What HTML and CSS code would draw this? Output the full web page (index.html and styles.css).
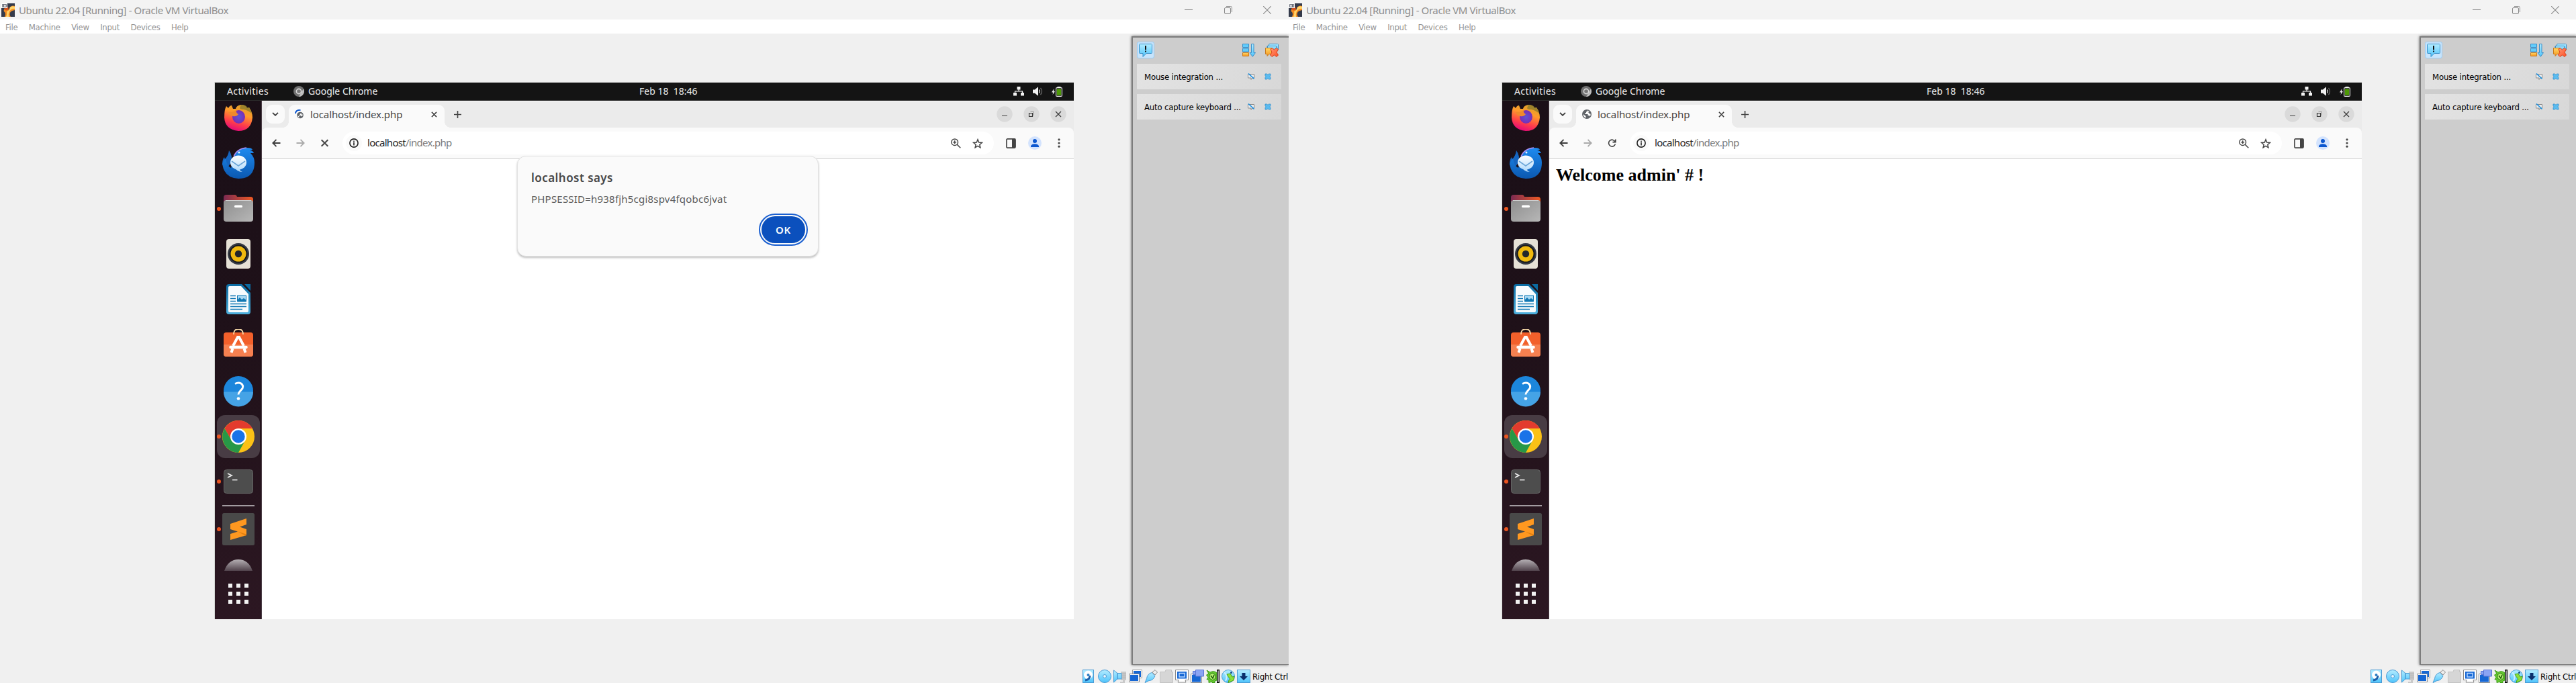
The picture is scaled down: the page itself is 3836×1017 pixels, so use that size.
FILE: index.html
```html
<!DOCTYPE html>
<html lang="en">
<head>
<meta charset="utf-8">
<title>Ubuntu 22.04 [Running] - Oracle VM VirtualBox</title>
<link rel="stylesheet" href="styles.css">
</head>
<body>
<svg class="defs" aria-hidden="true">
  <defs>
    <linearGradient id="gFox" x1="0.7" y1="0" x2="0.35" y2="1"><stop offset="0" stop-color="#d8a128"/><stop offset=".35" stop-color="#ff9a2c"/><stop offset=".7" stop-color="#ff3e4a"/><stop offset="1" stop-color="#e3067c"/></linearGradient>
    <radialGradient id="gFoxIn"><stop offset="0" stop-color="#5a55d8"/><stop offset="1" stop-color="#7a2db4"/></radialGradient>
    <linearGradient id="gBird" x1="0" y1="0" x2="0" y2="1"><stop offset="0" stop-color="#1e8bf0"/><stop offset="1" stop-color="#0b58b0"/></linearGradient>
    <linearGradient id="gEnv" x1="0" y1="0" x2="0" y2="1"><stop offset="0" stop-color="#fff"/><stop offset="1" stop-color="#b9defc"/></linearGradient>
    <linearGradient id="gTab"><stop offset="0" stop-color="#7c2a52"/><stop offset="1" stop-color="#ee5a24"/></linearGradient>
    <linearGradient id="gFold" x1="0" y1="0" x2="1" y2="1"><stop offset="0" stop-color="#8e8e8e"/><stop offset="1" stop-color="#b7b7b7"/></linearGradient>
    <linearGradient id="gDoc" x1="0" y1="0" x2="0" y2="1"><stop offset="0" stop-color="#0b6ba2"/><stop offset="1" stop-color="#4cb0dd"/></linearGradient>
    <linearGradient id="gDisc" x1="0" y1="0" x2="0" y2="1"><stop offset="0" stop-color="#b5b0b4"/><stop offset="1" stop-color="#51434c"/></linearGradient>
    <linearGradient id="gCyan" x1="0" y1="0" x2="0" y2="1"><stop offset="0" stop-color="#b4ecff"/><stop offset="1" stop-color="#4fc4fb"/></linearGradient>
    <linearGradient id="gOrange" x1="0" y1="0" x2="0" y2="1"><stop offset="0" stop-color="#ffd866"/><stop offset="1" stop-color="#f5941e"/></linearGradient>
    <linearGradient id="gRed" x1="0" y1="0" x2="1" y2="1"><stop offset="0" stop-color="#ff9a76"/><stop offset="1" stop-color="#ff5026"/></linearGradient>
    <linearGradient id="gMeter" x1="0" y1="0" x2="0" y2="1"><stop offset="0" stop-color="#f01000"/><stop offset=".5" stop-color="#ffd000"/><stop offset="1" stop-color="#20c000"/></linearGradient>
  </defs>

  <symbol id="vbox" viewBox="0 0 20 20"><path fill="#343a4a" d="M0 0h20v20H0z"/><path fill="#f28c22" d="M4 9q3-3 6 0q3 1 2-2q3-5 8-3v6q-6 1-7 4q-1 4 1 6H5q2-4 0-7q-2-1-1-4z"/><path fill="#ffd56b" d="M13 6q3-3 7-1v3q-6 0-8 4q-2 4-1 8H7q2-5 1-8q4-1 5-6z"/><circle cx="7.5" cy="7.5" r="3" fill="#d9531c"/><path fill="#fff" d="M0 0h9v7H0z"/><path fill="#4a4f5c" d="M1.2 1.2h6.6v4.6H1.2z"/><path fill="none" stroke="#fff" d="M2.5 2v3M4.5 2v3M6.5 2v3"/></symbol>
  <symbol id="min" viewBox="0 0 12 12"><path stroke="#8b8b8b" d="M0 5.5h12"/></symbol>
  <symbol id="max" viewBox="0 0 12 12"><rect x=".5" y="2.5" width="9" height="9" rx="1.5" fill="none" stroke="#8b8b8b"/><path fill="none" stroke="#8b8b8b" d="M3 .5h6.5a2 2 0 0 1 2 2V9"/></symbol>
  <symbol id="cls" viewBox="0 0 12 12"><path stroke="#8b8b8b" stroke-width="1.1" d="M0 0l12 12M12 0L0 12"/></symbol>

  <symbol id="chromeGrey" viewBox="0 0 16 16"><circle cx="8" cy="8" r="8" fill="#707070"/><path fill="#bdbdbd" d="M15 4.2A8 8 0 0 1 8 16l4-7z"/><circle cx="8" cy="8" r="4.4" fill="#d8d8d8"/><circle cx="8" cy="8" r="2.8" fill="#777"/></symbol>
  <symbol id="net" viewBox="0 0 16 14"><path fill="#f2f2f2" d="M5.5 0h5v4.5h-5zM0 9h5v4.5H0zM11 9h5v4.5h-5z"/><path fill="none" stroke="#f2f2f2" stroke-width="1.2" d="M8 4v3M2.5 10V6.8h11V10"/></symbol>
  <symbol id="vol" viewBox="0 0 15 14"><path fill="#f2f2f2" d="M0 4.5h3L8 .3v13.4l-5-4H0z"/><path fill="none" stroke="#ccc" stroke-width="1.3" d="M9.5 4.5q1.8 2.5 0 5"/><path fill="none" stroke="#666" stroke-width="1.3" d="M11.5 2q4 5 0 10"/></symbol>
  <symbol id="bat" viewBox="0 0 16 15"><path fill="#f2f2f2" d="M3.6 3L0 8.6h2.2L1.6 12L5 7H2.9z"/><rect x="6.6" y="1.6" width="8.8" height="12.8" rx="1.5" fill="#141414" stroke="#f2f2f2" stroke-width="1.1"/><path fill="#f2f2f2" d="M8.5 0h5v1.5h-5z"/><path fill="#4e9a06" d="M7.8 3.4h6.4v9.4H7.8z"/></symbol>

  <symbol id="firefox" viewBox="0 0 48 48"><path fill="url(#gFox)" d="M6 7l3 3q2-4 5-4l2 5h4q1-5 8-6q6 0 9 5l3-1q5 7 5 15q-2 20-21 20Q4 42 3 24Q3 12 6 7z"/><path fill="#8f7c2c" opacity=".8" d="M28 5q8 0 9 4l3 0q3 4 4 9q-6-5-12-6q-5 0-6-2z"/><ellipse cx="24.5" cy="23" rx="9.5" ry="10" fill="url(#gFoxIn)"/><path fill="#f08a2c" d="M9 16q8 0 12-3q-1 4 3 6q-3 4-8 3q-5-1-7-6z"/></symbol>
  <symbol id="bird" viewBox="0 0 48 48"><path fill="#1565c0" d="M10 5q6 8 3 18l-6 9l-7-6q0-8 3-11l1 3q5-5 6-13z"/><path fill="url(#gBird)" d="M17 16Q22 1 37 1q7 0 8 3l-4 0q5 2 6 5h-5q6 6 6 14q0 24-24 24Q3 46 0 25q2-5 5-8q2 12 8 14z"/><path fill="none" stroke="#a98cf2" stroke-width="1.6" d="M17 14Q22 2 36 1"/><ellipse cx="24" cy="23" rx="12" ry="10.5" fill="url(#gEnv)"/><path fill="#b9defc" d="M18 30q4 7 12 7q-5-2-4-5z"/><path fill="none" stroke="#6ba6d8" stroke-width="1.6" d="M14 21l10 7l10-7"/><circle cx="25" cy="8" r="1.5" fill="#e8f4ff"/></symbol>
  <symbol id="files" viewBox="0 0 48 48"><path fill="url(#gTab)" d="M2 7q0-4 4-4h13q2 0 3 3h20q4 0 4 4v10H2z"/><rect x="2" y="11" width="44" height="32" rx="4" fill="url(#gFold)"/><path stroke="#cfcfcf" d="M5 11.500h38"/><rect x="18" y="18.500" width="12" height="3.500" rx="1.500" fill="#fff"/></symbol>
  <symbol id="speaker" viewBox="0 0 48 48"><rect x="6" y="2" width="36" height="44" rx="4" fill="#e6e1d6"/><circle cx="24" cy="24" r="16" fill="#353a44"/><circle cx="24" cy="24" r="13.5" fill="#16181d"/><circle cx="24" cy="24" r="11.5" fill="#f0b90e"/><circle cx="24" cy="24" r="5.2" fill="#23262c"/></symbol>
  <symbol id="writer" viewBox="0 0 48 48"><path fill="url(#gDoc)" d="M10 1h19l13 13v28q0 4-4 4H10q-4 0-4-4V5q0-4 4-4z"/><path fill="#f7fbfd" d="M11 4h17l11 12v25q0 2-2 2H11q-2 0-2-2V6q0-2 2-2z"/><path fill="#0b6ba2" d="M33 1h9v10z"/><path stroke="#1178b4" stroke-width="1.5" d="M12 18.500h8M12 22.500h8M12 26.500h8M12 30.500h24M12 34.500h24M12 38.500h18"/><path fill="#a9d8f2" stroke="#1178b4" d="M22.500 18h13v9h-13z"/><path fill="#1178b4" d="M23 27v-3l3-3l3 3l3-2l4 3v2z"/></symbol>
  <symbol id="store" viewBox="0 0 48 48"><rect x="2" y="5" width="44" height="36" rx="4" fill="#f2602b"/><path fill="#f58050" d="M2 23h44v14q0 4-4 4H6q-4 0-4-4z"/><path fill="none" stroke="#f7d9a8" stroke-width="1.8" d="M17 8Q17 0 24 0t7 8"/><path fill="none" stroke="#fff" stroke-width="4" d="M16 25l7-13h2l7 13"/><path stroke="#fff" stroke-width="4.5" stroke-linecap="round" d="M12.500 27h23"/><path stroke="#fff" stroke-width="4" d="M15.500 29l-2 6M32.500 29l2 6"/></symbol>
  <symbol id="help" viewBox="0 0 48 48"><circle cx="24" cy="24" r="22" fill="#1c86dc"/><path fill="#45a3e6" d="M2 25.500h44A22 22 0 0 1 2 25.500z"/><path fill="none" stroke="#fff" stroke-width="3" d="M19 13.500q5-2.500 9-.5q4 3 2 7.500l-3.500 4q-2.500 2.500-2.500 5"/><circle cx="24" cy="35.5" r="2.3" fill="#fff"/></symbol>
  <symbol id="chrome" viewBox="0 0 48 48"><circle cx="24" cy="24" r="24" fill="#fbc116"/><path fill="#e33b2e" d="M3.500 12A24 24 0 0 1 45 12H24L14 30z"/><path fill="#279847" d="M3.500 12A24 24 0 0 0 24 48l10-18H14z"/><circle cx="24" cy="24" r="12" fill="#fff"/><circle cx="24" cy="24" r="9.7" fill="#1a73e8"/></symbol>
  <symbol id="term" viewBox="0 0 48 48"><rect x="2.5" y="6.5" width="43" height="35" rx="4" fill="#4d4d4d" stroke="#646464"/><path fill="none" stroke="#e8e8e8" stroke-width="1.8" d="M8 12l6 3l-6 3"/><path stroke="#ccc" stroke-width="2" d="M15 21.500h7.500"/></symbol>
  <symbol id="subl" viewBox="0 0 48 48"><rect width="48" height="48" rx="2.5" fill="#494949"/><path fill="#ff9820" d="M12 16l24-8v9l-10 3.500L36 24v9L12 40v-9l11-3.500L12 24z"/><path fill="#e37f0e" d="M23 27.500l13 4v1.500l-2 .5z"/></symbol>
  <symbol id="disc" viewBox="0 0 48 17"><path fill="url(#gDisc)" d="M3 17Q9 0 24 0t21 17z"/></symbol>
  <symbol id="grid" viewBox="0 0 30 30"><path fill="none" stroke="#f2f2f2" stroke-width="6" stroke-dasharray="6" d="M0 3h30M0 15h30M0 27h30"/></symbol>

  <symbol id="chev" viewBox="0 0 10 6"><path fill="none" stroke="#3c3c3c" stroke-width="1.8" d="M1 .8l4 4l4-4"/></symbol>
  <symbol id="x" viewBox="0 0 10 10"><path stroke="#444" stroke-width="1.7" d="M1 1l8 8M9 1L1 9"/></symbol>
  <symbol id="plus" viewBox="0 0 10 10"><path stroke="#444" stroke-width="1.5" d="M5 0v10M0 5h10"/></symbol>
  <symbol id="globe" viewBox="0 0 14 14"><circle cx="7" cy="7" r="7" fill="#5f6368"/><path fill="#fafafa" d="M8 1.500q0 2-2 2v1.500H4.500v2h4v2H10q1.500 0 1.500 1.500Q13 9 12.500 6.500h-2V5H9.500V3H11Q10 1.800 8 1.500zM1.500 7l4 3v2.500Q1.800 11.200 1.500 7z"/></symbol>
  <symbol id="loading" viewBox="0 0 14 14"><circle cx="8" cy="8.5" r="4.8" fill="#5f6368"/><path fill="#fafafa" d="M9 5q0 1.500-1.500 1.500v1.500H6v1h3l1 1.500q2-1 1.800-3h-1.500zM4.300 9l2.200 1.500v1.800Q4.500 11.500 4.300 9z"/><path fill="none" stroke="#0b57d0" stroke-width="2" d="M.8 6Q1.800.5 8.500.9"/></symbol>
  <symbol id="back" viewBox="0 0 13 12"><path fill="none" stroke="#3c3c3c" stroke-width="1.8" d="M12.500 6H1.500M6.500 .8L1.300 6l5.200 5.200"/></symbol>
  <symbol id="fwd" viewBox="0 0 13 12"><path fill="none" stroke="#ababab" stroke-width="1.8" d="M.5 6h11M6.500 .8L11.700 6l-5.200 5.200"/></symbol>
  <symbol id="reload" viewBox="0 0 13 13"><path fill="none" stroke="#3c3c3c" stroke-width="1.7" d="M11.300 4A5.400 5.400 0 1 0 11.800 8M12.200 .5v4.500H7.500"/></symbol>
  <symbol id="info" viewBox="0 0 14 14"><circle cx="7" cy="7" r="6.1" fill="none" stroke="#1f1f1f" stroke-width="1.6"/><path stroke="#1f1f1f" stroke-width="1.6" d="M7 6v4.500M7 3.600v1.600"/></symbol>
  <symbol id="zoomIn" viewBox="0 0 15 15"><circle cx="5.7" cy="5.7" r="4.8" fill="none" stroke="#444" stroke-width="1.5"/><path fill="none" stroke="#444" stroke-width="1.5" d="M9 9l5.300 5.300M5.700 3.300v4.800M3.300 5.700h4.800"/></symbol>
  <symbol id="star" viewBox="0 0 16 15"><path fill="none" stroke="#444" stroke-width="1.5" d="M8 1.800l1.700 4.200l4.600.4l-3.500 3l1.100 4.400L8 11.400l-3.900 2.400l1.100-4.400l-3.500-3l4.600-.4z"/></symbol>
  <symbol id="side" viewBox="0 0 15 15"><rect x=".9" y=".9" width="13.2" height="13.2" rx="1.3" fill="none" stroke="#444" stroke-width="1.6"/><path fill="#444" d="M9 1h5v13H9z"/></symbol>
  <symbol id="user" viewBox="0 0 20 20"><circle cx="10" cy="10" r="10" fill="#d3e3fd"/><circle cx="10" cy="7" r="3" fill="#0b57d0"/><path fill="#0b57d0" d="M4 16v-1.800q1.500-3 6-3t6 3V16z"/></symbol>
  <symbol id="dots" viewBox="0 0 4 14"><circle cx="2" cy="1.8" r="1.6" fill="#444"/><circle cx="2" cy="7" r="1.6" fill="#444"/><circle cx="2" cy="12.2" r="1.6" fill="#444"/></symbol>
  <symbol id="wmin" viewBox="0 0 24 24"><circle cx="12" cy="12" r="11.7" fill="#dadada"/><path stroke="#3c3c3c" d="M8 14.500h8"/></symbol>
  <symbol id="wmax" viewBox="0 0 24 24"><circle cx="12" cy="12" r="11.7" fill="#dadada"/><path fill="none" stroke="#3c3c3c" stroke-width="1.2" d="M8.500 10.500h5v5h-5z"/><path fill="none" stroke="#999" d="M10.500 8.500h5v5.500"/></symbol>
  <symbol id="wcls" viewBox="0 0 24 24"><circle cx="12" cy="12" r="11.7" fill="#dadada"/><path stroke="#3c3c3c" stroke-width="1.3" d="M8 8l8 8M16 8l-8 8"/></symbol>

  <symbol id="note" viewBox="0 0 20 20"><path fill="url(#gCyan)" stroke="#3a8fc8" d="M1.500.5h17q1 0 1 1v12q0 1-1 1H11l-5 5v-5H1.500q-1 0-1-1v-12q0-1 1-1z"/><path stroke="#111" stroke-width="2" d="M10 3v6M10 10.500v2"/></symbol>
  <symbol id="sort" viewBox="0 0 20 20"><g stroke="#3a8fc8"><path fill="#62ccfb" d="M.5.5h9v5h-9zM.5 7h9v5h-9z"/><path fill="url(#gOrange)" stroke="#c87a1e" d="M.5 13.500h9v5h-9z"/><path fill="url(#gCyan)" d="M13.500.5H17v13h2.500l-4.200 5.800l-4.200-5.800h2.400z"/></g></symbol>
  <symbol id="clear" viewBox="0 0 20 20"><path fill="url(#gCyan)" stroke="#3a8fc8" d="M6 .5h12.500q1 0 1 1v8H3v-6h2z"/><path fill="url(#gCyan)" stroke="#3a8fc8" d="M3.500 3.500h13v6h-13z"/><path fill="url(#gOrange)" stroke="#c87a1e" d="M.5 6.500h10v9H6l-3 3v-3H.5z"/><path fill="url(#gRed)" stroke="#d8421a" d="M8 8l2.500-1.500L13.500 9l3-2.500L19.500 8.500L17 13l2.500 4l-2.500 2.500l-3.500-2.500l-3.500 2.500L7.500 17L10 13z"/></symbol>
  <symbol id="mute" viewBox="0 0 10 10"><path fill="#eee" stroke="#888" d="M.5 1.500h9v5.500H7l-2 2.500V7H.5z"/><path stroke="#1e90e0" stroke-width="1.6" d="M1 .5l8.500 8"/></symbol>
  <symbol id="xblue" viewBox="0 0 10 10"><path fill="#5bbcf0" stroke="#3590cc" stroke-width=".8" d="M1 1h2.500L5 2.300L6.500 1H9v2.500L7.800 5L9 6.500V9H6.500L5 7.800L3.500 9H1V6.500L2.200 5L1 3.500z"/></symbol>

  <symbol id="s1" viewBox="0 0 20 20"><rect x=".5" y=".5" width="16" height="19" fill="url(#gCyan)" stroke="#4a9ad4"/><circle cx="8.5" cy="8" r="6.5" fill="#fff"/><circle cx="8.5" cy="8" r="2" fill="#2b7fc4"/><path fill="none" stroke="#1d5fa8" stroke-width="3" d="M11 9q0 6-7 7"/></symbol>
  <symbol id="s2" viewBox="0 0 20 20"><circle cx="10" cy="10" r="9.5" fill="url(#gCyan)" stroke="#4a9ad4"/><circle cx="10" cy="10" r="2.5" fill="#e6f6ff" stroke="#4a9ad4"/></symbol>
  <symbol id="s3" viewBox="0 0 20 20"><path fill="#c9c9c9" d="M11 3h8v13h-2v4h-7v-2h4v-2h-3z"/><path stroke="#aaa" d="M13 6.500h6M13 9.500h6M13 12.500h6"/><path fill="url(#gCyan)" stroke="#4a9ad4" d="M.5 1L6 5.500V14L.5 19zM6 5.500h6V14H6z"/></symbol>
  <symbol id="s4" viewBox="0 0 20 20"><path fill="#fff" stroke="#9a9a9a" d="M5.500.5h14v12h-14z"/><path fill="#1667d4" d="M7 2h11v9H7z"/><path fill="#fff" stroke="#8a8a8a" d="M.5 6.500h15v12H.5z"/><path fill="#1667d4" d="M2 8h12v9H2z"/></symbol>
  <symbol id="s5" viewBox="0 0 20 20"><path fill="#eee" stroke="#888" d="M12 4l4-3.500L19.500 4L16 8z"/><path fill="url(#gCyan)" stroke="#4a9ad4" d="M11 4.500l5 5q-3 7-9 7l-6 3l2.500-6q1-7 7.500-9z"/></symbol>
  <symbol id="s6" viewBox="0 0 20 20"><path fill="#d6d6d6" stroke="#c2c2c2" d="M.5 3.500H8l1-3h8.500v3h2v16H.5z"/></symbol>
  <symbol id="s7" viewBox="0 0 20 20"><path fill="#fff" stroke="#8a8a8a" d="M.5.5h19v15H15l1 3.500H4l1-3.500H.5z"/><path fill="#1667d4" d="M3 3h14v10.500H3z"/><path fill="none" stroke="#b8d8ff" stroke-width="1.4" d="M6 5.500h8v5.500H6z"/></symbol>
  <symbol id="s8" viewBox="0 0 20 20"><path fill="#fff" stroke="#8a8a8a" d="M.5 6.500h16v13H.5z"/><path fill="#1667d4" d="M2 8h13v10.500H2z"/><path fill="#8aa4f4" stroke="#5a74d4" d="M7.500.5h12V10h-12zM3.500 2.500h4v5h-4z"/></symbol>
  <symbol id="s9" viewBox="0 0 20 20"><path fill="#66c832" stroke="#3a9a14" d="M1 1l5 3q6-3 10 1v11l-3 1v2.500H9V18l-5 1.500v-4l-3-1l2-3L.5 8L4 6z"/><path fill="#b4f070" stroke="#2a7a10" d="M5 8l4-3l5 3v5l-4 3l-5-3z"/><path fill="none" stroke="#1c5a0a" stroke-width="1.6" d="M7 9l3 4l2-5"/><rect x="16.7" y=".7" width="2.6" height="18.6" class="meter" stroke="#000" stroke-width="1.4"/></symbol>
  <symbol id="s10" viewBox="0 0 20 20"><circle cx="10" cy="10" r="9.5" fill="url(#gCyan)" stroke="#4a9ad4"/><path fill="none" stroke="#cdefff" stroke-width="2" d="M4 4q6 6 2 13"/><path fill="#8be03a" stroke="#4aa016" d="M8 7l5-1l3 5l3-1l-1 6l-8 3.500l1-4l2-1l-3-4z"/><circle cx="14.5" cy="4.5" r="1.5" fill="#134a80"/></symbol>
  <symbol id="s11" viewBox="0 0 20 20"><rect x=".5" y=".5" width="19" height="19" fill="url(#gCyan)" stroke="#4a9ad4"/><path fill="#0a2f6c" d="M7.500 5h5v5H16l-6 6l-6-6h3.500z"/></symbol>
</svg>

<main class="screens">
  <section class="screen">
    <div class="vm">
      <header class="titlebar">
        <svg class="i20"><use href="#vbox"/></svg><span class="title">Ubuntu 22.04 [Running] - Oracle VM VirtualBox</span>
        <div class="winbtns"><svg><use href="#min"/></svg><svg><use href="#max"/></svg><svg><use href="#cls"/></svg></div>
      </header>
      <nav class="menubar"><span>File</span><span>Machine</span><span>View</span><span>Input</span><span>Devices</span><span>Help</span></nav>
      <div class="workspace">
        <div class="guest">
          <div class="topbar">
            <span class="activities">Activities</span><svg class="i16"><use href="#chromeGrey"/></svg><span class="app">Google Chrome</span>
            <span class="clock">Feb 18&nbsp; 18:46</span>
            <div class="tray"><svg class="net"><use href="#net"/></svg><svg class="vol"><use href="#vol"/></svg><svg class="bat"><use href="#bat"/></svg></div>
          </div>
          <div class="desktop">
            <aside class="dock">
              <div class="app-ico"><svg><use href="#firefox"/></svg></div>
              <div class="app-ico"><svg><use href="#bird"/></svg></div>
              <div class="app-ico on"><svg><use href="#files"/></svg></div>
              <div class="app-ico"><svg><use href="#speaker"/></svg></div>
              <div class="app-ico"><svg><use href="#writer"/></svg></div>
              <div class="app-ico"><svg><use href="#store"/></svg></div>
              <div class="app-ico"><svg><use href="#help"/></svg></div>
              <div class="app-ico on active"><svg><use href="#chrome"/></svg></div>
              <div class="app-ico on"><svg><use href="#term"/></svg></div>
              <hr>
              <div class="app-ico on subl"><svg><use href="#subl"/></svg></div>
              <svg class="disc"><use href="#disc"/></svg>
              <svg class="grid"><use href="#grid"/></svg>
            </aside>
            <div class="browser">
              <div class="tabs">
                <div class="tabsearch"><svg><use href="#chev"/></svg></div>
                <div class="tab"><svg class="fav"><use href="#loading"/></svg><span>localhost/index.php</span><svg class="x"><use href="#x"/></svg></div>
                <svg class="plus"><use href="#plus"/></svg>
                <div class="wmbtns"><svg><use href="#wmin"/></svg><svg><use href="#wmax"/></svg><svg><use href="#wcls"/></svg></div>
              </div>
              <div class="toolbar">
                <svg class="nav"><use href="#back"/></svg><svg class="nav"><use href="#fwd"/></svg><svg class="nav"><use href="#x"/></svg>
                <div class="omnibox"><span class="chip"><svg><use href="#info"/></svg></span><span class="url">localhost<span>/index.php</span></span><svg class="zoom"><use href="#zoomIn"/></svg><svg class="star"><use href="#star"/></svg></div>
                <svg class="side"><use href="#side"/></svg><svg class="user"><use href="#user"/></svg><svg class="dots"><use href="#dots"/></svg>
              </div>
              <div class="page">
                <div class="alert"><strong>localhost says</strong><p>PHPSESSID=h938fjh5cgi8spv4fqobc6jvat</p><button>OK</button></div>
              </div>
            </div>
          </div>
        </div>
        <aside class="notices">
          <div class="notice-tools"><span class="toggle"><svg class="i20"><use href="#note"/></svg></span><svg class="i20"><use href="#sort"/></svg><svg class="i20"><use href="#clear"/></svg></div>
          <div class="notice"><span>Mouse integration ...</span><svg><use href="#mute"/></svg><svg><use href="#xblue"/></svg></div>
          <div class="notice"><span>Auto capture keyboard ...</span><svg><use href="#mute"/></svg><svg><use href="#xblue"/></svg></div>
        </aside>
      </div>
      <footer class="statusbar busy"><svg><use href="#s1"/></svg><svg><use href="#s2"/></svg><svg><use href="#s3"/></svg><svg><use href="#s4"/></svg><svg><use href="#s5"/></svg><svg><use href="#s6"/></svg><svg><use href="#s7"/></svg><svg><use href="#s8"/></svg><svg><use href="#s9"/></svg><svg><use href="#s10"/></svg><svg><use href="#s11"/></svg><span>Right Ctrl</span></footer>
    </div>
  </section>

  <section class="screen second">
    <div class="vm">
      <header class="titlebar">
        <svg class="i20"><use href="#vbox"/></svg><span class="title">Ubuntu 22.04 [Running] - Oracle VM VirtualBox</span>
        <div class="winbtns"><svg><use href="#min"/></svg><svg><use href="#max"/></svg><svg><use href="#cls"/></svg></div>
      </header>
      <nav class="menubar"><span>File</span><span>Machine</span><span>View</span><span>Input</span><span>Devices</span><span>Help</span></nav>
      <div class="workspace">
        <div class="guest">
          <div class="topbar">
            <span class="activities">Activities</span><svg class="i16"><use href="#chromeGrey"/></svg><span class="app">Google Chrome</span>
            <span class="clock">Feb 18&nbsp; 18:46</span>
            <div class="tray"><svg class="net"><use href="#net"/></svg><svg class="vol"><use href="#vol"/></svg><svg class="bat"><use href="#bat"/></svg></div>
          </div>
          <div class="desktop">
            <aside class="dock">
              <div class="app-ico"><svg><use href="#firefox"/></svg></div>
              <div class="app-ico"><svg><use href="#bird"/></svg></div>
              <div class="app-ico on"><svg><use href="#files"/></svg></div>
              <div class="app-ico"><svg><use href="#speaker"/></svg></div>
              <div class="app-ico"><svg><use href="#writer"/></svg></div>
              <div class="app-ico"><svg><use href="#store"/></svg></div>
              <div class="app-ico"><svg><use href="#help"/></svg></div>
              <div class="app-ico on active"><svg><use href="#chrome"/></svg></div>
              <div class="app-ico on"><svg><use href="#term"/></svg></div>
              <hr>
              <div class="app-ico on subl"><svg><use href="#subl"/></svg></div>
              <svg class="disc"><use href="#disc"/></svg>
              <svg class="grid"><use href="#grid"/></svg>
            </aside>
            <div class="browser">
              <div class="tabs">
                <div class="tabsearch"><svg><use href="#chev"/></svg></div>
                <div class="tab"><svg class="fav"><use href="#globe"/></svg><span>localhost/index.php</span><svg class="x"><use href="#x"/></svg></div>
                <svg class="plus"><use href="#plus"/></svg>
                <div class="wmbtns"><svg><use href="#wmin"/></svg><svg><use href="#wmax"/></svg><svg><use href="#wcls"/></svg></div>
              </div>
              <div class="toolbar">
                <svg class="nav"><use href="#back"/></svg><svg class="nav"><use href="#fwd"/></svg><svg class="nav"><use href="#reload"/></svg>
                <div class="omnibox"><span class="chip"><svg><use href="#info"/></svg></span><span class="url">localhost<span>/index.php</span></span><svg class="zoom"><use href="#zoomIn"/></svg><svg class="star"><use href="#star"/></svg></div>
                <svg class="side"><use href="#side"/></svg><svg class="user"><use href="#user"/></svg><svg class="dots"><use href="#dots"/></svg>
              </div>
              <div class="page"><h1>Welcome admin' # !</h1></div>
            </div>
          </div>
        </div>
        <aside class="notices">
          <div class="notice-tools"><span class="toggle"><svg class="i20"><use href="#note"/></svg></span><svg class="i20"><use href="#sort"/></svg><svg class="i20"><use href="#clear"/></svg></div>
          <div class="notice"><span>Mouse integration ...</span><svg><use href="#mute"/></svg><svg><use href="#xblue"/></svg></div>
          <div class="notice"><span>Auto capture keyboard ...</span><svg><use href="#mute"/></svg><svg><use href="#xblue"/></svg></div>
        </aside>
      </div>
      <footer class="statusbar"><svg><use href="#s1"/></svg><svg><use href="#s2"/></svg><svg><use href="#s3"/></svg><svg><use href="#s4"/></svg><svg><use href="#s5"/></svg><svg><use href="#s6"/></svg><svg><use href="#s7"/></svg><svg><use href="#s8"/></svg><svg><use href="#s9"/></svg><svg><use href="#s10"/></svg><svg><use href="#s11"/></svg><span>Right Ctrl</span></footer>
    </div>
  </section>
</main>
</body>
</html>
```
FILE: styles.css
```css
* { box-sizing: border-box; }
body { margin: 0; background: #f0f0f0; font-family: "Noto Sans", sans-serif; }
svg { display: block; flex: none; overflow: visible; }
span, p, strong, h1 { white-space: nowrap; }
.defs { position: absolute; width: 0; height: 0; }

.screens { display: flex; height: 1017px; }
.screen { width: 1919px; height: 1017px; overflow: hidden; flex: none; }
.screen.second { width: 1917px; }
.vm { width: 1919px; height: 1017px; display: flex; flex-direction: column; background: #f0f0f0; }
.second .vm { width: 1920px; margin-left: -2px; }

.i20 { width: 20px; height: 20px; }
.i16 { width: 16px; height: 16px; }

/* host window chrome */
.titlebar { height: 29px; background: #f3f3f3; display: flex; align-items: center; padding: 0 26px 0 2px; }
.title { margin-left: 6px; font-size: 15px; letter-spacing: -0.4px; color: #8e8e8e; }
.winbtns { margin-left: auto; display: flex; gap: 46.5px; }
.winbtns svg { width: 12px; height: 12px; }
.menubar { height: 21px; background: #fff; display: flex; align-items: center; gap: 16.5px; padding: 2px 0 0 8px; font: 13px "DejaVu Sans Condensed", "DejaVu Sans", sans-serif; letter-spacing: -0.3px; color: #949494; }

.workspace { height: 944px; display: flex; align-items: flex-start; justify-content: space-between; padding-left: 320px; }

/* guest display */
.guest { width: 1279px; height: 800px; margin-top: 72px; border-top: 1px solid #dcdcdc; display: flex; flex-direction: column; box-shadow: -1px 0 #d6d9d6; }
.second .guest { width: 1280px; }
.topbar { height: 27px; background: #141414; color: #ededed; display: grid; grid-template-columns: 99px 22px 493px 1fr auto; align-items: center; padding: 0 17px 0 18px; font-size: 14px; line-height: 26px; border-bottom: 1px solid #2b2b2b; }
.activities { letter-spacing: 0.37px; }
.tray { display: flex; gap: 13px; align-items: center; }
.net { width: 16px; height: 14px; }
.vol { width: 15px; height: 14px; }
.bat { width: 16px; height: 15px; }

.desktop { flex: 1; display: flex; min-height: 0; }
.dock { width: 70px; padding: 1px 2px 0 3px; background: linear-gradient(155deg, #1a0f17, #1f1119 45%, #2c1722); border-right: 1px solid #4a3d45; display: flex; flex-direction: column; align-items: center; }
.app-ico { width: 64px; height: 48px; margin-bottom: 19.8px; display: grid; place-items: center; position: relative; flex: none; }
.app-ico svg { width: 48px; height: 48px; }
.app-ico.on::before { content: ""; position: absolute; left: 0; top: 21px; width: 6px; height: 6px; border-radius: 50%; background: #e95420; z-index: 1; }
.app-ico.active { height: 64px; margin: -8px 0 11.8px; border-radius: 12px; background: #483c44; }
.app-ico.active::before { top: 29px; }
.dock hr { width: 48px; height: 2px; margin: -9.5px 0 10.5px; border: 0; background: #a29ba0; flex: none; }
.app-ico.subl { margin-bottom: 21px; }
.disc { width: 48px; height: 17px; }
.grid { width: 30px; height: 30px; margin-top: 19px; }

.browser { flex: 1; display: flex; flex-direction: column; min-width: 0; background: linear-gradient(#ebebeb 50px, #fff 50px); }
.tabs { height: 40px; border-top: 1px solid #f8f8f8; display: flex; align-items: flex-start; padding: 5px 11px 0 6px; }
.tabsearch { width: 28px; height: 28px; border-radius: 9px; background: #fafafa; display: grid; place-items: center; }
.tabsearch svg { width: 10px; height: 6px; }
.tab { width: 232px; height: 34px; margin-left: 6px; border-radius: 9px 9px 0 0; background: #fafafa; display: flex; align-items: center; padding: 0 11px 6px 9px; position: relative; font-size: 15px; line-height: 20px; letter-spacing: -0.1px; color: #474747; }
.tab span { padding-bottom: 1px; }
.tab::before, .tab::after { content: ""; position: absolute; bottom: 0; width: 9px; height: 9px; }
.tab::before { left: -9px; background: radial-gradient(circle at 0 0, #ebebeb 8.7px, #fafafa 9px); }
.tab::after { right: -9px; background: radial-gradient(circle at 100% 0, #ebebeb 8.7px, #fafafa 9px); }
.fav { width: 14px; height: 14px; margin-right: 9px; }
.tab .x { width: 9px; height: 9px; margin-left: auto; }
.plus { width: 11px; height: 11px; margin: 9px 0 0 14px; }
.wmbtns { margin: 2px 0 0 auto; display: flex; gap: 16px; }
.wmbtns svg { width: 24px; height: 24px; }
.toolbar { height: 47px; background: #fafafa; border-bottom: 1px solid #cdcdcd; border-radius: 8px 8px 0 0; display: flex; align-items: center; padding: 0 20px 0 15px; }
.nav { width: 13px; height: 12px; margin-right: 23px; }
.omnibox { flex: 1; height: 34px; margin: 0 18px 0 -3px; border-radius: 17px; background: #fff; display: flex; align-items: center; padding: 0 16px 0 5px; }
.chip { width: 24px; height: 24px; border-radius: 50%; background: #fafafa; display: grid; place-items: center; }
.chip svg { width: 14px; height: 14px; }
.url { margin-left: 8px; padding-bottom: 2px; font-size: 15px; letter-spacing: -0.72px; color: #1f1f1f; }
.url span { color: #7c7c7c; }
.zoom { width: 15px; height: 15px; margin-left: auto; }
.star { width: 16px; height: 15px; margin-left: 17px; }
.side { width: 15px; height: 15px; }
.user { width: 20px; height: 20px; margin-left: 18px; }
.dots { width: 4px; height: 14px; margin-left: 24px; }

.page { flex: 1; background: #fff; position: relative; }
.page h1 { margin: 0; padding: 8px 0 0 10px; font: bold 26px/32px "Liberation Serif", serif; color: #000; }
.alert { position: absolute; left: 380px; top: -5px; z-index: 2; width: 449px; height: 150px; padding: 19px 20px 0; border: 1px solid #e2e2e2; border-radius: 13px; background: #fafafa; box-shadow: 0 2px 3px rgba(0, 0, 0, .25); }
.alert strong { display: block; font-size: 17px; line-height: 26px; font-weight: 600; letter-spacing: 0.45px; color: #474747; }
.alert p { margin: 7px 0 0; font-size: 15px; line-height: 22px; letter-spacing: 0.21px; color: #5c5c5c; }
.alert button { position: absolute; right: 19px; top: 89px; width: 65px; height: 40px; padding: 0; border: 0; border-radius: 20px; background: #0b50bd; outline: 2px solid #1a5fd0; outline-offset: 2px; color: #fff; font: 600 15px "Noto Sans", sans-serif; letter-spacing: 0.74px; }

/* notification centre */
.notices { width: 234px; height: 936px; margin-top: 4px; background: #cdcdcd; border: solid #7d7d7d; border-width: 2px 0 1px 2px; padding: 6px 11px 0 6px; box-shadow: 0 0 4px rgba(0, 0, 0, .6); }
.notice-tools { height: 33px; display: flex; align-items: flex-start; }
.toggle { width: 26px; height: 25px; margin-right: auto; border: 1px solid #9accf5; border-radius: 3px; background: #c8e4fb; display: grid; place-items: center; }
.notice-tools > .i20 { margin: 3px 4px 0 10px; }
.notice { height: 38px; margin-bottom: 7px; background: linear-gradient(110deg, #e3e3e3, #d8d8d8); display: flex; align-items: center; padding: 0 15px 0 11px; font: 13px "DejaVu Sans Condensed", "DejaVu Sans", sans-serif; letter-spacing: -0.18px; color: #000; }
.notice span { margin-right: auto; }
.notice svg { width: 10px; height: 10px; }
.notice svg + svg { margin-left: 15px; }

.statusbar { height: 20px; margin-top: 3px; display: flex; align-items: center; justify-content: flex-end; gap: 3px; padding-right: 1px; font: 13px "DejaVu Sans Condensed", "DejaVu Sans", sans-serif; letter-spacing: -0.23px; color: #000; }
.statusbar svg { width: 20px; height: 20px; }
.meter { fill: #fff; }
.busy .meter { fill: url(#gMeter); }
```
